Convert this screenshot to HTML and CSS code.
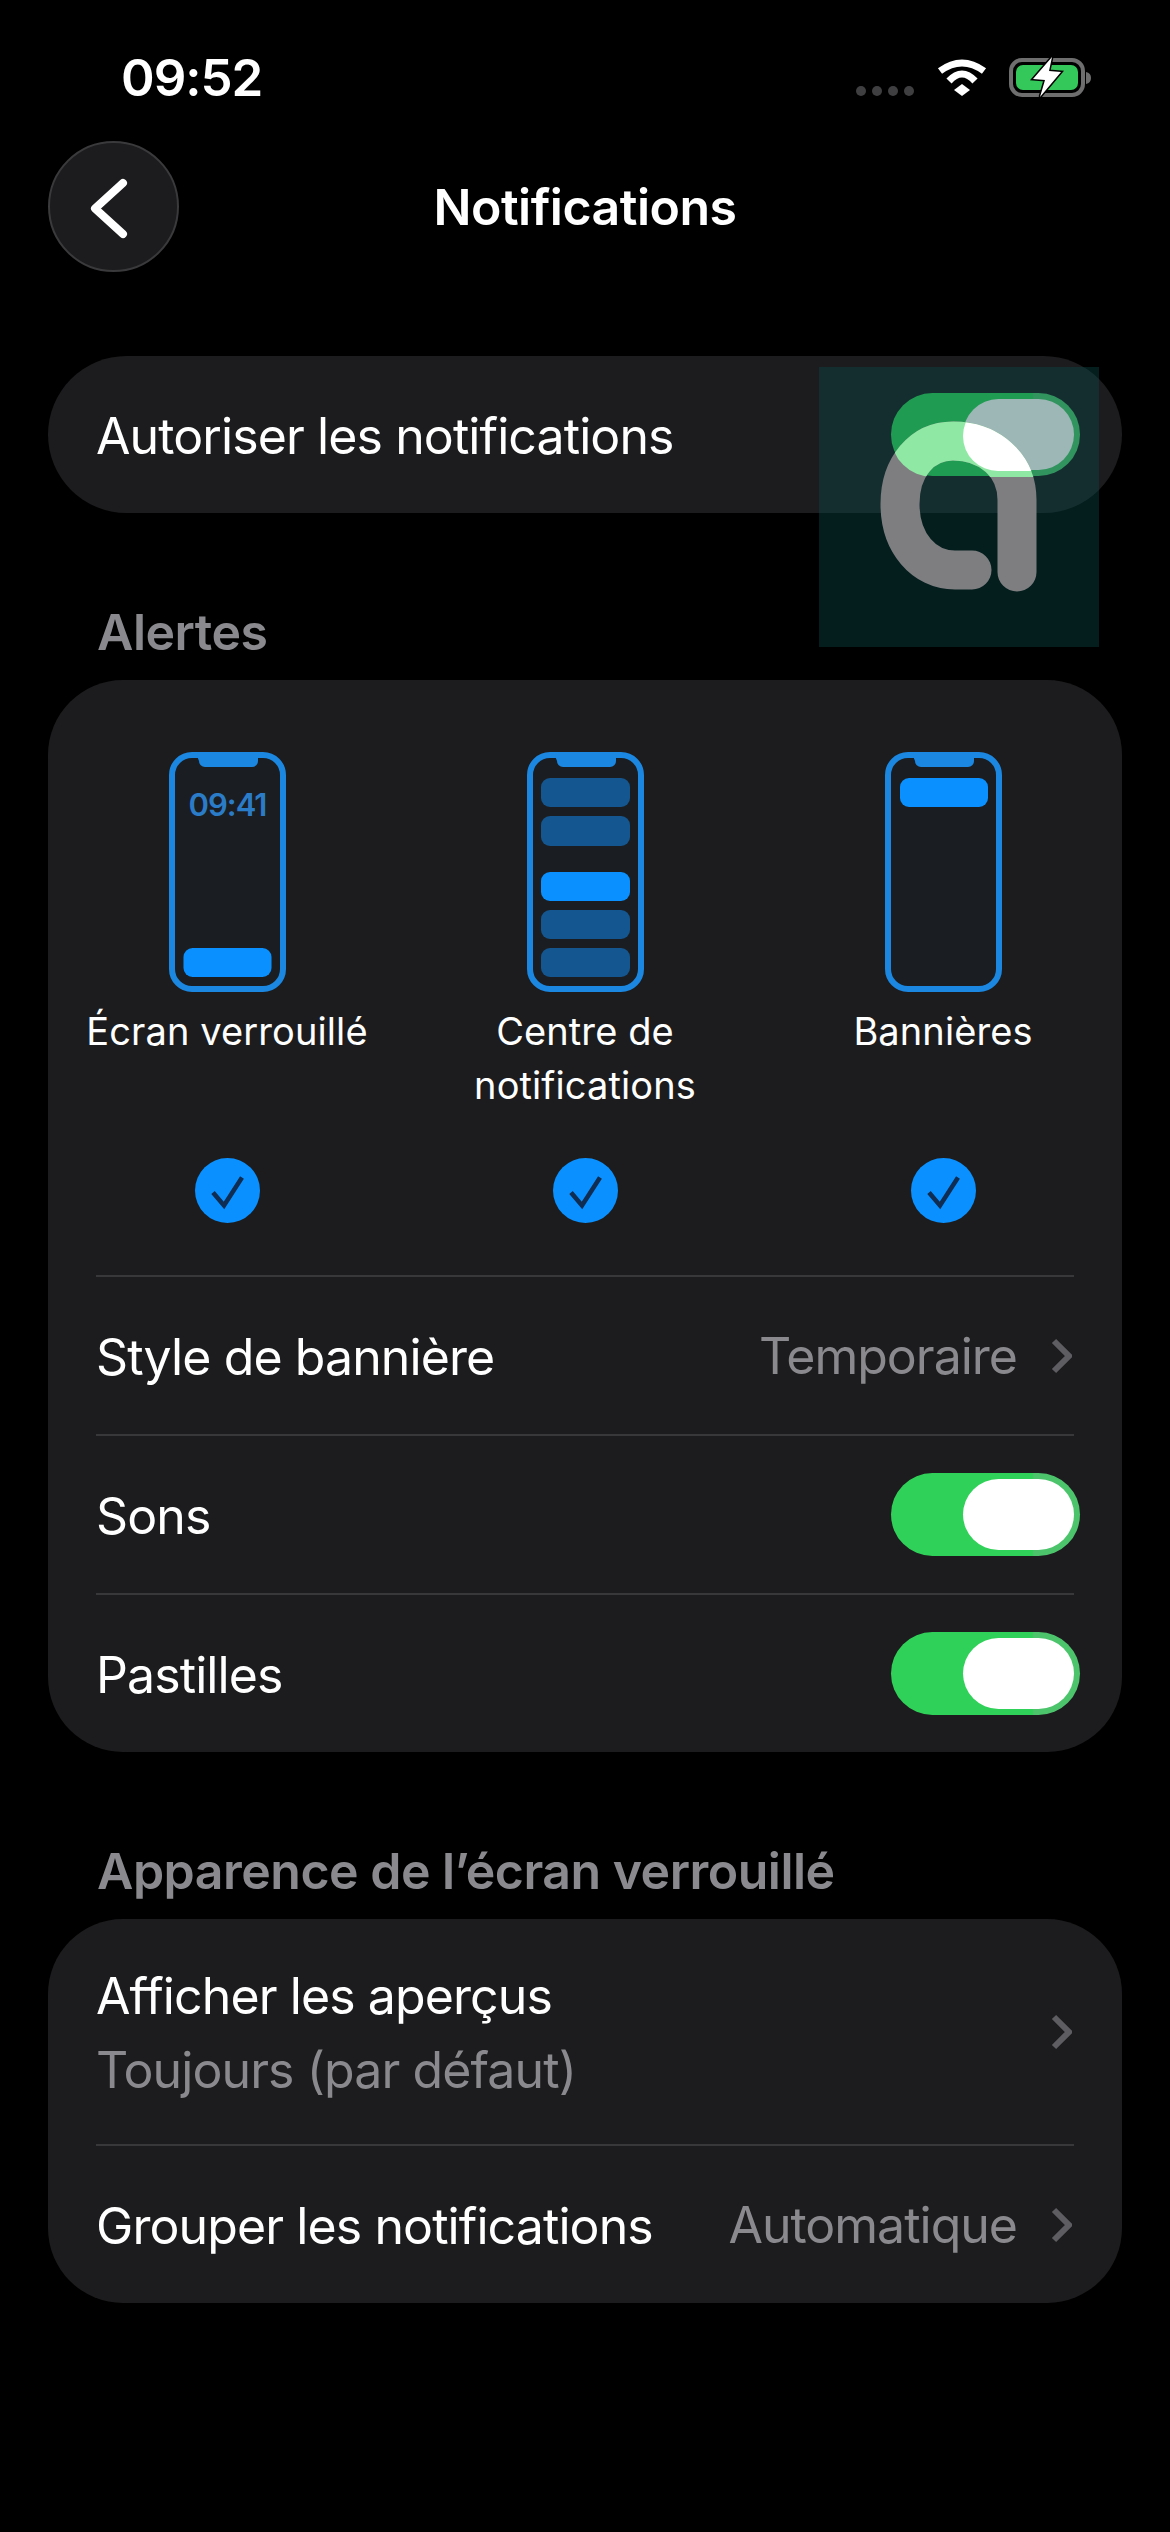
FILE: index.html
```html
<!DOCTYPE html>
<html lang="fr">
	<head>
		<meta charset="utf-8">
		<title>Notifications</title>
		<link rel="stylesheet" href="styles.css">
	</head>
	<body>
	<div class="screen">
		<!--barre d'etat-->
		<div class="status">
			<span class="time">09:52</span>
			<div class="status_icons">
				<div class="cell"><i></i><i></i><i></i><i></i></div>
				<svg class="wifi" width="50" height="38" viewBox="0 0 50 38">
					<path d="M3 13Q25 -3 47 13" fill="none" stroke="#fff" stroke-width="7"/>
					<path d="M12 23Q25 9 38 23" fill="none" stroke="#fff" stroke-width="7"/>
					<path d="M17 32L25 26L33 32L25 38Z" fill="#fff"/>
				</svg>
				<svg class="battery" width="84" height="43" viewBox="0 -2 84 43">
					<rect x="2" y="2" width="72" height="35" rx="11" fill="none" stroke="#6e6e6e" stroke-width="4"/>
					<rect x="7" y="7" width="62" height="25" rx="7" fill="#34c759"/>
					<path d="M77 14q5 1 5 6t-5 6z" fill="#6e6e6e"/>
					<path d="M43 -1L24 21L36 22L31 39L52 14L40 13Z" fill="#fff" stroke="#000" stroke-width="3" paint-order="stroke"/>
				</svg>
			</div>
		</div>
		<!--titre-->
		<div class="nav">
			<a class="back" href="javascript:;">
				<svg width="56" height="64" viewBox="0 0 56 64"><path d="M37 8L9 33.5L37 59" fill="none" stroke="#fff" stroke-width="8" stroke-linecap="round" stroke-linejoin="round"/></svg>
			</a>
			<h1>Notifications</h1>
		</div>

		<div class="card card_first">
			<div class="row row_single">
				<span class="row_name">Autoriser les notifications</span>
				<span class="switch"><i></i></span>
			</div>
		</div>

		<h2>Alertes</h2>
		<div class="card">
			<div class="picker">
				<div class="picker_col">
					<svg class="phone" width="117" height="240" viewBox="0 0 117 240">
						<use href="#phone_body"/>
						<text class="phone_time" x="58.5" y="64" text-anchor="middle">09:41</text>
						<rect class="note_on" x="14.5" y="196" width="88" height="29" rx="9"/>
					</svg>
					<div class="picker_label">Écran verrouillé</div>
					<svg class="check" width="65" height="65" viewBox="0 0 65 65"><use href="#check_mark"/></svg>
				</div>
				<div class="picker_col">
					<svg class="phone" width="117" height="240" viewBox="0 0 117 240">
						<use href="#phone_body"/>
						<rect class="note_off" x="14" y="26" width="89" height="29" rx="9"/>
						<rect class="note_off" x="14" y="64" width="89" height="30" rx="9"/>
						<rect class="note_on" x="14" y="120" width="89" height="29" rx="9"/>
						<rect class="note_off" x="14" y="158" width="89" height="29" rx="9"/>
						<rect class="note_off" x="14" y="196" width="89" height="29" rx="9"/>
					</svg>
					<div class="picker_label">Centre de<br>notifications</div>
					<svg class="check" width="65" height="65" viewBox="0 0 65 65"><use href="#check_mark"/></svg>
				</div>
				<div class="picker_col">
					<svg class="phone" width="117" height="240" viewBox="0 0 117 240">
						<use href="#phone_body"/>
						<rect class="note_on" x="15" y="26" width="88" height="29" rx="9"/>
					</svg>
					<div class="picker_label">Bannières</div>
					<svg class="check" width="65" height="65" viewBox="0 0 65 65"><use href="#check_mark"/></svg>
				</div>
			</div>
			<div class="row">
				<span class="row_name">Style de bannière</span>
				<span class="row_value">Temporaire<svg class="arrow" width="21" height="36" viewBox="0 0 21 36"><path d="M3 3L18 18L3 33" fill="none" stroke="#5e5e62" stroke-width="6"/></svg></span>
			</div>
			<div class="row">
				<span class="row_name">Sons</span>
				<span class="switch"><i></i></span>
			</div>
			<div class="row">
				<span class="row_name">Pastilles</span>
				<span class="switch"><i></i></span>
			</div>
		</div>

		<h2>Apparence de l’écran verrouillé</h2>
		<div class="card">
			<div class="row row_double">
				<span class="row_name">Afficher les aperçus<br><em>Toujours (par défaut)</em></span>
				<svg class="arrow" width="21" height="36" viewBox="0 0 21 36"><path d="M3 3L18 18L3 33" fill="none" stroke="#5e5e62" stroke-width="6"/></svg>
			</div>
			<div class="row">
				<span class="row_name">Grouper les notifications</span>
				<span class="row_value">Automatique<svg class="arrow" width="21" height="36" viewBox="0 0 21 36"><path d="M3 3L18 18L3 33" fill="none" stroke="#5e5e62" stroke-width="6"/></svg></span>
			</div>
		</div>

		<!--logo par-dessus la page-->
		<svg class="stamp" width="280" height="280" viewBox="0 0 280 280">
			<defs>
				<clipPath id="clip_switch"><rect x="72" y="27" width="189" height="83" rx="41.5"/></clipPath>
				<clipPath id="clip_knob"><rect x="144" y="34" width="112" height="70" rx="35"/></clipPath>
				<path id="stamp_line" d="M198 205V133C198 98 170 74 134 74C103 74 81 100 81 137C81 176 105 203 136 203H153" fill="none" stroke-width="39" stroke-linecap="round"/>
			</defs>
			<rect width="280" height="280" fill="rgb(10,75,75)" fill-opacity=".4"/>
			<use href="#stamp_line" stroke="#7e7e80"/>
			<g clip-path="url(#clip_switch)"><use href="#stamp_line" stroke="#8fe8a3"/></g>
			<g clip-path="url(#clip_knob)"><use href="#stamp_line" stroke="#fff"/></g>
		</svg>

		<!--formes communes-->
		<svg class="defs" width="0" height="0">
			<defs>
				<g id="phone_body">
					<rect x="3" y="3" width="111" height="234" rx="20" fill="#1a1e22" stroke="#1b87e0" stroke-width="6"/>
					<path d="M28 4H89V9A6 6 0 0 1 83 15H36A6 6 0 0 1 30 9Z" fill="#1b87e0"/>
				</g>
				<g id="check_mark">
					<circle cx="32.5" cy="32.5" r="32.5" fill="#0a91ff"/>
					<path d="M18 34.500L29 47.500L47 19.500" fill="none" stroke="#0f2c52" stroke-width="4.500"/>
				</g>
			</defs>
		</svg>
	</div>
	</body>
</html>
```
FILE: styles.css
```css
*{margin:0px;padding:0px;box-sizing:border-box;}
body{background:#000;color:#fff;font-family:Inter,"Liberation Sans",sans-serif;}
.screen{position:relative;width:1170px;height:2532px;overflow:hidden;background:#000;}
/*barre d'etat*/
.status{height:141px;padding:48px 79px 0px 121px;display:flex;justify-content:space-between;align-items:flex-start;}
.time{font-size:51px;line-height:60px;font-weight:600;letter-spacing:-1px;}
.status_icons{display:flex;align-items:flex-end;height:38px;margin-top:10px;}
.cell{display:flex;gap:6px;margin-right:23px;}
.cell i{display:block;width:10px;height:10px;border-radius:50%;background:#3f3f41;}
.wifi{display:block;margin-right:22px;}
.battery{display:block;margin-bottom:-3px;margin-right:-2px;}
/*titre*/
.nav{display:grid;grid-template-columns:131px 1fr 131px;align-items:center;margin:0px 48px;height:131px;}
.back{width:131px;height:131px;border-radius:50%;background:#1c1c1e;border:2px solid #3a3a3c;display:flex;align-items:center;justify-content:center;}
.back svg{display:block;}
h1{font-size:50px;line-height:60px;font-weight:600;text-align:center;letter-spacing:-0.5px;}
/*groupes*/
h2{font-size:50px;line-height:56px;font-weight:600;color:#8a8a8e;margin:91px 0px 20px 97px;letter-spacing:-0.5px;}
.card{margin:0px 48px;background:#1c1c1e;border-radius:75px;overflow:hidden;}
.card_first{margin-top:84px;border-radius:79px;}
.row{margin:0px 48px;height:159px;display:flex;align-items:center;justify-content:space-between;border-top:2px solid #38383a;font-size:50px;line-height:74px;letter-spacing:-1px;}
.row:first-child{border-top:none;}
.row_single{height:157px;}
.row_double{height:225px;}
.row_name{letter-spacing:-0.9px;padding-top:2px;}
.row em{font-style:normal;color:#8a8a8e;}
.row_value{display:flex;align-items:center;color:#8a8a8e;}
.arrow{display:block;flex:none;margin-left:34px;margin-right:2px;}
.row_double .arrow{margin-left:0px;}
/*interrupteur*/
.switch{display:block;position:relative;flex:none;width:189px;height:83px;margin-right:-6px;border-radius:42px;background:linear-gradient(to right,#30d158 75%,#4cc46c 75%);}
.switch i{display:block;position:absolute;right:6px;top:6px;width:111px;height:71px;border-radius:36px;background:#fff;}
/*choix des alertes*/
.picker{display:grid;grid-template-columns:repeat(3,1fr);padding:72px 0px 52px;}
.picker_col{display:flex;flex-direction:column;align-items:center;}
.phone{display:block;}
.picker_label{margin-top:12px;height:108px;font-size:38px;line-height:54px;text-align:center;letter-spacing:0.1px;}
.check{display:block;margin-top:46px;}
.phone_time{font-size:31px;font-weight:600;fill:#2b7cc8;font-family:Inter,"Liberation Sans",sans-serif;letter-spacing:-1px;}
.note_on{fill:#0a91ff;}
.note_off{fill:#14568f;}
/*logo*/
.stamp{position:absolute;left:819px;top:367px;display:block;}
.defs{position:absolute;}
```
